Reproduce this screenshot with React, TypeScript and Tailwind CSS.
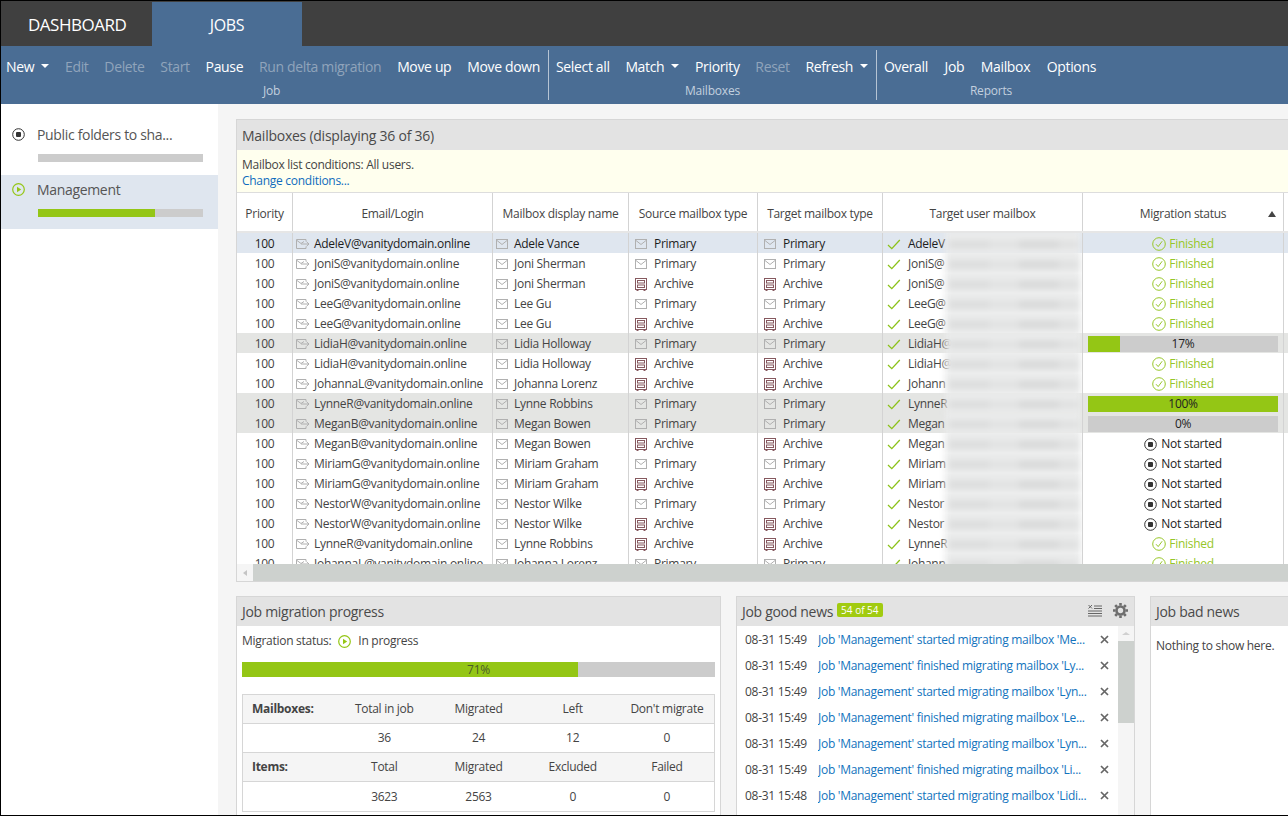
import type { ReactNode } from "react";

type Status = "finished" | "notstarted" | number;

type Row = {
  email: string;
  name: string;
  source: "Primary" | "Archive";
  target: "Primary" | "Archive";
  short: string;
  status: Status;
  tone?: "selected" | "busy";
};

const rows: Row[] = [
  { email: "AdeleV@vanitydomain.online", name: "Adele Vance", source: "Primary", target: "Primary", short: "AdeleV", status: "finished", tone: "selected" },
  { email: "JoniS@vanitydomain.online", name: "Joni Sherman", source: "Primary", target: "Primary", short: "JoniS@", status: "finished" },
  { email: "JoniS@vanitydomain.online", name: "Joni Sherman", source: "Archive", target: "Archive", short: "JoniS@", status: "finished" },
  { email: "LeeG@vanitydomain.online", name: "Lee Gu", source: "Primary", target: "Primary", short: "LeeG@", status: "finished" },
  { email: "LeeG@vanitydomain.online", name: "Lee Gu", source: "Archive", target: "Archive", short: "LeeG@", status: "finished" },
  { email: "LidiaH@vanitydomain.online", name: "Lidia Holloway", source: "Primary", target: "Primary", short: "LidiaH@", status: 17, tone: "busy" },
  { email: "LidiaH@vanitydomain.online", name: "Lidia Holloway", source: "Archive", target: "Archive", short: "LidiaH@", status: "finished" },
  { email: "JohannaL@vanitydomain.online", name: "Johanna Lorenz", source: "Archive", target: "Archive", short: "Johann", status: "finished" },
  { email: "LynneR@vanitydomain.online", name: "Lynne Robbins", source: "Primary", target: "Primary", short: "LynneR", status: 100, tone: "busy" },
  { email: "MeganB@vanitydomain.online", name: "Megan Bowen", source: "Primary", target: "Primary", short: "Megan", status: 0, tone: "busy" },
  { email: "MeganB@vanitydomain.online", name: "Megan Bowen", source: "Archive", target: "Archive", short: "Megan", status: "notstarted" },
  { email: "MiriamG@vanitydomain.online", name: "Miriam Graham", source: "Primary", target: "Primary", short: "Miriam", status: "notstarted" },
  { email: "MiriamG@vanitydomain.online", name: "Miriam Graham", source: "Archive", target: "Archive", short: "Miriam", status: "notstarted" },
  { email: "NestorW@vanitydomain.online", name: "Nestor Wilke", source: "Primary", target: "Primary", short: "Nestor", status: "notstarted" },
  { email: "NestorW@vanitydomain.online", name: "Nestor Wilke", source: "Archive", target: "Archive", short: "Nestor", status: "notstarted" },
  { email: "LynneR@vanitydomain.online", name: "Lynne Robbins", source: "Archive", target: "Archive", short: "LynneR", status: "finished" },
  { email: "JohannaL@vanitydomain.online", name: "Johanna Lorenz", source: "Primary", target: "Primary", short: "Johann", status: "finished" },
];

const news = [
  ["08-31 15:49", "Job 'Management' started migrating mailbox 'Me..."],
  ["08-31 15:49", "Job 'Management' finished migrating mailbox 'Ly..."],
  ["08-31 15:49", "Job 'Management' started migrating mailbox 'Lyn..."],
  ["08-31 15:49", "Job 'Management' finished migrating mailbox 'Le..."],
  ["08-31 15:49", "Job 'Management' started migrating mailbox 'Lyn..."],
  ["08-31 15:49", "Job 'Management' finished migrating mailbox 'Li..."],
  ["08-31 15:48", "Job 'Management' started migrating mailbox 'Lidi..."],
];

const columns = "grid grid-cols-[56px_200px_136px_129px_125px_200px_201px_1fr]";
const cell = "flex items-center border-r border-[#d3d3d3] pt-[2px]";
const headCell = "flex h-full items-center justify-center border-r border-[#d3d3d3] pt-[3px]";

function Envelope() {
  return (
    <svg width="12" height="10" viewBox="0 0 12 10" fill="none" stroke="#b0b0b0" className="shrink-0">
      <rect x="0.5" y="0.5" width="11" height="9" />
      <path d="M1 1.5 6 5.5 11 1.5" />
    </svg>
  );
}

function ForwardEnvelope() {
  return (
    <svg width="14" height="10" viewBox="0 0 14 10" fill="none" stroke="#b0b0b0" className="shrink-0">
      <path d="M10 2.5V.5H.5v9h9.5V7.5" />
      <path d="M1 1.5 5 4.5 8 2.5" />
      <path d="M5 5h8M10.5 2.7 13 5 10.5 7.3" />
    </svg>
  );
}

function ArchiveIcon() {
  return (
    <svg width="12" height="13" viewBox="0 0 12 13" fill="none" stroke="#86595f" className="shrink-0">
      <rect x="0.5" y="0.5" width="11" height="11" />
      <rect x="2.5" y="2.5" width="7" height="2.5" />
      <rect x="2.5" y="7" width="7" height="2.5" />
      <path d="M1.5 12.5h2M8.5 12.5h2" />
    </svg>
  );
}

function MailType({ type }: { type: "Primary" | "Archive" }) {
  return (
    <div className="flex items-center gap-[7px] pl-[6px]">
      <span className="flex w-[12px] justify-center">{type === "Primary" ? <Envelope /> : <ArchiveIcon />}</span>
      <span>{type}</span>
    </div>
  );
}

function CircleCheck() {
  return (
    <svg width="14" height="14" viewBox="0 0 14 14" fill="none" stroke="#98c72a" className="shrink-0">
      <circle cx="7" cy="7" r="6.3" />
      <path d="M4 7.2 6.2 9.6 10.2 4.2" />
    </svg>
  );
}

function StopCircle() {
  return (
    <svg width="13" height="13" viewBox="0 0 13 13" className="shrink-0">
      <circle cx="6.5" cy="6.5" r="5.8" fill="none" stroke="#333" />
      <rect x="4" y="4" width="5" height="5" rx="1" fill="#333" />
    </svg>
  );
}

function PlayCircle() {
  return (
    <svg width="13" height="13" viewBox="0 0 13 13" className="shrink-0">
      <circle cx="6.5" cy="6.5" r="5.8" fill="none" stroke="#94c615" strokeWidth="1.2" />
      <path d="M5 3.8 9.2 6.5 5 9.2Z" fill="#94c615" />
    </svg>
  );
}

function Caret() {
  return <span className="ml-[7px] mb-[1px] inline-block h-0 w-0 border-x-[4.5px] border-t-[4.5px] border-x-transparent border-t-white" />;
}

function ToolItem({ children, off, caret }: { children: string; off?: boolean; caret?: boolean }) {
  return (
    <span className={`flex items-center whitespace-nowrap ${off ? "text-[#90a4bb]" : "text-white"}`}>
      {children}
      {caret && <Caret />}
    </span>
  );
}

function ToolGroup({ label, className, inner, labelClass, children }: { label: string; className: string; inner: string; labelClass?: string; children: ReactNode }) {
  return (
    <div className={`flex h-[50px] flex-col items-center ${className}`}>
      <div className={`flex h-[32px] w-full items-center justify-between text-[14px] tracking-[-0.35px] ${inner}`}>{children}</div>
      <div className={`text-[12px] tracking-[-0.2px] text-[#c3d0df] ${labelClass ?? ""}`}>{label}</div>
    </div>
  );
}

function StatusCell({ status }: { status: Status }) {
  if (status === "finished") {
    return (
      <div className="flex w-full items-center justify-center gap-[3px] text-[#96c62a]">
        <CircleCheck />
        <span>Finished</span>
      </div>
    );
  }
  if (status === "notstarted") {
    return (
      <div className="flex w-full items-center justify-center gap-[4px] text-[#222]">
        <StopCircle />
        <span>Not started</span>
      </div>
    );
  }
  return (
    <div className="w-full px-[5px]">
      <div className="relative h-[16px] bg-[#cccccc]">
        <div className="h-full bg-[#94c615]" style={{ width: `${status}%` }} />
        <span className="absolute inset-0 flex items-center justify-center text-[#222]">{status}%</span>
      </div>
    </div>
  );
}

function TableRow({ row }: { row: Row }) {
  const tone = row.tone === "selected" ? "bg-[#dfe6ef] text-[#1d1d1d]" : row.tone === "busy" ? "bg-[#e4e5e3]" : "bg-white";
  return (
    <div className={`${columns} h-[20px] items-stretch whitespace-nowrap ${tone}`}>
      <div className={`${cell} justify-center`}>100</div>
      <div className={`${cell} gap-[4px] overflow-hidden pl-[3px]`}>
        <ForwardEnvelope />
        <span>{row.email}</span>
      </div>
      <div className={`${cell} gap-[6px] pl-[3px]`}>
        <Envelope />
        <span>{row.name}</span>
      </div>
      <div className={cell}>
        <MailType type={row.source} />
      </div>
      <div className={cell}>
        <MailType type={row.target} />
      </div>
      <div className={`${cell} relative gap-[7px] overflow-hidden pl-[4px]`}>
        <svg width="14" height="11" viewBox="0 0 14 11" fill="none" stroke="#8cc21a" strokeWidth="1.3" className="shrink-0">
          <path d="M1 6 4.8 9.6 12.8 1" />
        </svg>
        <span>{row.short}</span>
        <div className="absolute left-[62px] top-[-3px] flex h-[26px] w-[136px] items-center bg-[#eaebeb] pl-[4px] pt-[3px] blur-[3px]">
          <div className="h-[7px] w-[40px] bg-[#dadbdb]" />
          <div className="h-[7px] w-[30px] bg-[#e0e1e1]" />
          <div className="h-[7px] w-[40px] bg-[#d6d7d7]" />
          <div className="h-[7px] w-[20px] bg-[#dfe0e0]" />
        </div>
      </div>
      <div className={cell}>
        <StatusCell status={row.status} />
      </div>
      <div />
    </div>
  );
}

function Panel({ title, className, extra, children }: { title: ReactNode; className: string; extra?: ReactNode; children: ReactNode }) {
  return (
    <section className={`flex shrink-0 flex-col border border-[#d6d6d6] bg-white ${className}`}>
      <header className="flex h-[29px] shrink-0 items-center justify-between bg-[#e3e3e3] px-[5px] text-[14px] tracking-[-0.3px] text-[#4a4a4a]">
        <div className="flex items-center gap-[4px]">{title}</div>
        {extra}
      </header>
      {children}
    </section>
  );
}

function StatRow({ cells, shaded, bold }: { cells: string[]; shaded?: boolean; bold?: string }) {
  return (
    <div className={`grid h-[29px] grid-cols-5 items-center border-b border-[#d6d6d6] last:border-b-0 ${shaded ? "bg-[#f5f5f5]" : "bg-white"}`}>
      <div className="pl-[9px] font-bold text-[#444]">{bold}</div>
      {cells.map((value, i) => (
        <div key={i} className="text-center">{value}</div>
      ))}
    </div>
  );
}

export default function App() {
  return (
    <div className="flex h-[816px] w-[1288px] flex-col overflow-hidden border-t border-b border-l border-black bg-[#f5f5f5] font-['Open_Sans','Noto_Sans',sans-serif] text-[12px] tracking-[-0.28px] text-[#444]">
      <nav className="flex h-[45px] shrink-0 bg-[#404040] pt-[1px] text-white">
        <div className="flex w-[151px] items-center pl-[27px] pt-[2px] text-[17px] tracking-[-0.5px]">DASHBOARD</div>
        <div className="flex w-[150px] items-center justify-center bg-[#4a6d94] pt-[2px] text-[16px] tracking-[-0.3px]">JOBS</div>
      </nav>

      <div className="flex h-[58px] shrink-0 items-center bg-[#4a6d94]">
        <ToolGroup label="Job" className="w-[548px] border-r border-[#b6c4d4]" inner="pl-[5px] pr-[8px]" labelClass="pr-[6px]">
          <ToolItem caret>New</ToolItem>
          <ToolItem off>Edit</ToolItem>
          <ToolItem off>Delete</ToolItem>
          <ToolItem off>Start</ToolItem>
          <ToolItem>Pause</ToolItem>
          <ToolItem off>Run delta migration</ToolItem>
          <ToolItem>Move up</ToolItem>
          <ToolItem>Move down</ToolItem>
        </ToolGroup>
        <ToolGroup label="Mailboxes" className="w-[328px] border-r border-[#b6c4d4]" inner="pl-[7px] pr-[8px]">
          <ToolItem>Select all</ToolItem>
          <ToolItem caret>Match</ToolItem>
          <ToolItem>Priority</ToolItem>
          <ToolItem off>Reset</ToolItem>
          <ToolItem caret>Refresh</ToolItem>
        </ToolGroup>
        <ToolGroup label="Reports" className="w-[228px]" inner="pl-[7px] pr-[9px]">
          <ToolItem>Overall</ToolItem>
          <ToolItem>Job</ToolItem>
          <ToolItem>Mailbox</ToolItem>
          <ToolItem>Options</ToolItem>
        </ToolGroup>
      </div>

      <div className="flex min-h-0 flex-1">
        <aside className="w-[217px] shrink-0 bg-white pt-[1px] text-[14px] tracking-[-0.33px] text-[#555]">
          <div className="h-[70px] px-[11px] pt-[19px]">
            <div className="flex items-center gap-[12px]">
              <StopCircle />
              <span>Public folders to sha...</span>
            </div>
            <div className="mt-[9px] ml-[26px] h-[8px] w-[165px] bg-[#cccccc]" />
          </div>
          <div className="h-[54px] bg-[#dfe6ef] px-[11px] pt-[4px]">
            <div className="flex items-center gap-[12px]">
              <PlayCircle />
              <span>Management</span>
            </div>
            <div className="mt-[9px] ml-[26px] h-[8px] w-[165px] bg-[#cccccc]">
              <div className="h-full w-[117px] bg-[#94c615]" />
            </div>
          </div>
        </aside>

        <main className="flex min-w-0 flex-1 flex-col gap-[14px] overflow-hidden pt-[15px] pl-[18px]">
          <section className="h-[463px] w-[1060px] shrink-0 border border-[#d6d6d6] bg-white">
            <header className="flex h-[30px] items-center bg-[#e3e3e3] px-[5px] text-[14px] tracking-[-0.25px] text-[#4a4a4a]">Mailboxes (displaying 36 of 36)</header>
            <div className="h-[43px] border-b border-[#dddddd] bg-[#ffffee] px-[5px] pt-[7px] leading-[16px]">
              <div>Mailbox list conditions: All users.</div>
              <div className="text-[#0f6cbd]">Change conditions...</div>
            </div>
            <div className={`${columns} h-[40px] items-center border-b-2 border-[#e6e6e6] text-center`}>
              <div className={headCell}>Priority</div>
              <div className={headCell}>Email/Login</div>
              <div className={headCell}>Mailbox display name</div>
              <div className={headCell}>Source mailbox type</div>
              <div className={headCell}>Target mailbox type</div>
              <div className={headCell}>Target user mailbox</div>
              <div className={`${headCell} relative`}>
                Migration status
                <span className="absolute right-[7px] top-[18px] h-0 w-0 border-x-[4px] border-b-[6px] border-x-transparent border-b-[#444]" />
              </div>
              <div />
            </div>
            <div className="h-[331px] overflow-hidden">
              {rows.map((row, i) => (
                <TableRow key={i} row={row} />
              ))}
            </div>
            <div className="flex h-[17px]">
              <div className="flex w-[16px] items-center justify-center bg-[#f5f5f5]">
                <span className="h-0 w-0 border-y-[3.5px] border-r-[4px] border-y-transparent border-r-[#c4c4c4]" />
              </div>
              <div className="flex-1 bg-[#cdd1ce]" />
            </div>
          </section>

          <div className="flex gap-[15px]">
            <Panel title="Job migration progress" className="h-[230px] w-[485px]">
              <div className="px-[5px]">
                <div className="flex h-[30px] items-center">
                  <span>Migration status:</span>
                  <span className="ml-[7px] mr-[7px]"><PlayCircle /></span>
                  <span>In progress</span>
                </div>
                <div className="relative mt-[6px] h-[15px] bg-[#cccccc]">
                  <div className="h-full w-[336px] bg-[#94c615]" />
                  <span className="absolute inset-0 flex items-center justify-center text-[#4a5a2a]">71%</span>
                </div>
                <div className="mt-[17px] border border-[#d6d6d6]">
                  <StatRow shaded bold="Mailboxes:" cells={["Total in job", "Migrated", "Left", "Don't migrate"]} />
                  <StatRow cells={["36", "24", "12", "0"]} />
                  <StatRow shaded bold="Items:" cells={["Total", "Migrated", "Excluded", "Failed"]} />
                  <StatRow cells={["3623", "2563", "0", "0"]} />
                </div>
              </div>
            </Panel>

            <Panel
              className="h-[230px] w-[399px]"
              title={
                <>
                  <span>Job good news</span>
                  <span className="mb-[3px] rounded-[2px] bg-[#a1cb10] px-[4px] text-[10px] leading-[14px] tracking-[0] text-white">54 of 54</span>
                </>
              }
              extra={
                <div className="mb-[2px] flex items-center gap-[11px] pr-[1px]">
                  <svg width="14" height="14" viewBox="0 0 14 14" fill="none" stroke="#666">
                    <path d="M.5 1 4 4.5M4 1 .5 4.5" />
                    <path d="M6 2h8M6 4.5h8M0 7h14M0 9.5h14M0 12h14" />
                  </svg>
                  <svg width="15" height="15" viewBox="0 0 15 15" fill="none" stroke="#6e6e6e">
                    <circle cx="7.5" cy="7.5" r="4" strokeWidth="2.6" />
                    <path strokeWidth="2.6" d="M7.5 0v2.5M7.5 12.5V15M0 7.5h2.5M12.5 7.5H15M2.2 2.2 4 4M11 11l1.8 1.8M12.8 2.2 11 4M4 11l-1.8 1.8" />
                  </svg>
                </div>
              }
            >
              <div className="flex min-h-0 flex-1">
                <div className="flex-1 pt-[1px] pl-[8px]">
                  {news.map(([time, text], i) => (
                    <div key={i} className="flex h-[26px] items-center whitespace-nowrap">
                      <span className="w-[73px] shrink-0">{time}</span>
                      <span className="w-[282px] shrink-0 overflow-hidden text-[#1273bd]">{text}</span>
                      <svg width="9" height="9" viewBox="0 0 9 9" stroke="#666" strokeWidth="1.7" className="mb-[2px] shrink-0">
                        <path d="M1 1 8 8M8 1 1 8" />
                      </svg>
                    </div>
                  ))}
                </div>
                <div className="w-[16px] shrink-0 bg-[#f5f5f5]">
                  <div className="flex h-[15px] items-center justify-center">
                    <span className="h-0 w-0 border-x-[4px] border-b-[3.5px] border-x-transparent border-b-[#d0d0d0]" />
                  </div>
                  <div className="h-[82px] bg-[#cdd1ce]" />
                </div>
              </div>
            </Panel>

            <Panel title="Job bad news" className="h-[230px] w-[200px]">
              <div className="px-[5px] pt-[11px]">Nothing to show here.</div>
            </Panel>
          </div>
        </main>
      </div>
    </div>
  );
}
